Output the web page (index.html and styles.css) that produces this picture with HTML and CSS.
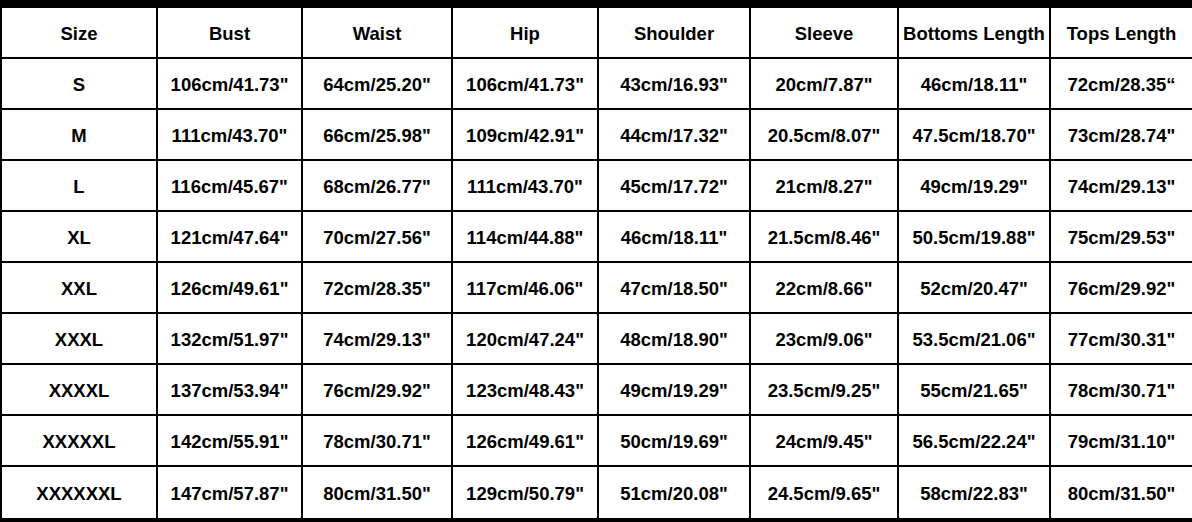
FILE: index.html
```html
<!DOCTYPE html>
<html>
<head>
<meta charset="utf-8">
<link rel="stylesheet" href="styles.css">
</head>
<body>
<div class="sheet">
  <div class="grid">
    <div class="c">Size</div><div class="c">Bust</div><div class="c">Waist</div><div class="c">Hip</div><div class="c">Shoulder</div><div class="c">Sleeve</div><div class="c">Bottoms Length</div><div class="c">Tops Length</div>
    <div class="c">S</div><div class="c">106cm/41.73"</div><div class="c">64cm/25.20"</div><div class="c">106cm/41.73"</div><div class="c">43cm/16.93"</div><div class="c">20cm/7.87"</div><div class="c">46cm/18.11"</div><div class="c">72cm/28.35“</div>
    <div class="c">M</div><div class="c">111cm/43.70"</div><div class="c">66cm/25.98"</div><div class="c">109cm/42.91"</div><div class="c">44cm/17.32"</div><div class="c">20.5cm/8.07"</div><div class="c">47.5cm/18.70"</div><div class="c">73cm/28.74"</div>
    <div class="c">L</div><div class="c">116cm/45.67"</div><div class="c">68cm/26.77"</div><div class="c">111cm/43.70"</div><div class="c">45cm/17.72"</div><div class="c">21cm/8.27"</div><div class="c">49cm/19.29"</div><div class="c">74cm/29.13"</div>
    <div class="c">XL</div><div class="c">121cm/47.64"</div><div class="c">70cm/27.56"</div><div class="c">114cm/44.88"</div><div class="c">46cm/18.11"</div><div class="c">21.5cm/8.46"</div><div class="c">50.5cm/19.88"</div><div class="c">75cm/29.53"</div>
    <div class="c">XXL</div><div class="c">126cm/49.61"</div><div class="c">72cm/28.35"</div><div class="c">117cm/46.06"</div><div class="c">47cm/18.50"</div><div class="c">22cm/8.66"</div><div class="c">52cm/20.47"</div><div class="c">76cm/29.92"</div>
    <div class="c">XXXL</div><div class="c">132cm/51.97"</div><div class="c">74cm/29.13"</div><div class="c">120cm/47.24"</div><div class="c">48cm/18.90"</div><div class="c">23cm/9.06"</div><div class="c">53.5cm/21.06"</div><div class="c">77cm/30.31"</div>
    <div class="c">XXXXL</div><div class="c">137cm/53.94"</div><div class="c">76cm/29.92"</div><div class="c">123cm/48.43"</div><div class="c">49cm/19.29"</div><div class="c">23.5cm/9.25"</div><div class="c">55cm/21.65"</div><div class="c">78cm/30.71"</div>
    <div class="c">XXXXXL</div><div class="c">142cm/55.91"</div><div class="c">78cm/30.71"</div><div class="c">126cm/49.61"</div><div class="c">50cm/19.69"</div><div class="c">24cm/9.45"</div><div class="c">56.5cm/22.24"</div><div class="c">79cm/31.10"</div>
    <div class="c last">XXXXXXL</div><div class="c last">147cm/57.87"</div><div class="c last">80cm/31.50"</div><div class="c last">129cm/50.79"</div><div class="c last">51cm/20.08"</div><div class="c last">24.5cm/9.65"</div><div class="c last">58cm/22.83"</div><div class="c last">80cm/31.50"</div>
  </div>
</div>
</body>
</html>
```
FILE: styles.css
```css
html, body {
  margin: 0;
  padding: 0;
  background: #fff;
}
.sheet {
  width: 1192px;
  height: 522px;
  box-sizing: border-box;
  border-top: 8px solid #000;
  border-bottom: 4px solid #000;
  border-left: 2px solid #000;
  overflow: hidden;
}
.grid {
  display: grid;
  grid-template-columns: 156px 145px 150px 146px 152px 148px 152px 141px;
  grid-auto-rows: 51px;
}
.c {
  box-sizing: border-box;
  border-right: 2px solid #000;
  border-bottom: 2px solid #000;
  display: flex;
  align-items: center;
  justify-content: center;
  padding-top: 2px;
  font-family: "Liberation Sans", Arial, sans-serif;
  font-weight: bold;
  font-size: 18.5px;
  color: #000;
  white-space: nowrap;
}
.c:nth-child(8n) {
  border-right: none;
}
.c.last {
  border-bottom: none;
}
```
